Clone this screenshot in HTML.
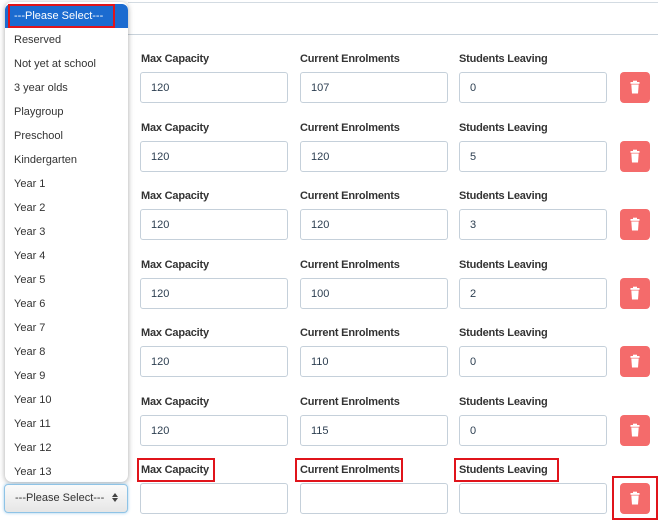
<!DOCTYPE html>
<html><head><style>
body{margin:0;width:658px;height:520px;background:#fff;font-family:"Liberation Sans",sans-serif;position:relative;overflow:hidden;font-size:11px;color:#212529}
.a{position:absolute}
.lbl{position:absolute;font-size:11px;color:#222;font-weight:bold;letter-spacing:-0.2px;opacity:.92}
.in{position:absolute;border:1px solid #c5d0da;border-radius:3px;font-size:11px;color:#2c3e50;line-height:31px;padding-left:10px;box-sizing:border-box;height:31px}
.btn{position:absolute;left:620px;width:30px;height:31px;background:#f46b6b;border-radius:4px}
.dd{left:5px;top:2px;width:123px;height:480px;background:#fff;border-radius:7px;box-shadow:0 1px 6px rgba(0,0,0,.35)}
.it{position:absolute;left:9px;font-size:11px;color:#333}
</style></head><body>
<div class="a" style="left:128px;top:2px;width:540px;height:31px;border-top:1px solid #d3dbe2;border-bottom:1px solid #c8d2db"></div>
<div id="rows"></div>
<div class="a dd">
<div class="a" style="left:0;top:2px;width:123px;height:24px;background:#1b6bd0;border-radius:6px 6px 0 0"></div>
<div class="a" style="left:3px;top:2px;width:103px;height:20px;border:2px solid #e0141b"></div>
<div class="a" style="left:9px;top:8px;color:#fff;font-size:11px">---Please Select---</div>
</div>
<div class="a" style="left:4px;top:484px;width:124px;height:29px;border:1px solid #8ec3e6;border-radius:4px;box-sizing:border-box;box-shadow:0 0 3px #9fcbea;background:linear-gradient(#fafafa,#e6e6e6);font-size:11px;color:#333;line-height:27px;padding-left:10px">---Please Select--- <svg width="6" height="9" style="margin-left:5px;vertical-align:-1px"><path d="M0 4L3 0L6 4z M0 5L3 9L6 5z" fill="#444"/></svg></div>
<script>
var v=[["120","107","0"],["120","120","5"],["120","120","3"],["120","100","2"],["120","110","0"],["120","115","0"],["","",""]];
var h="";var items=["Reserved","Not yet at school","3 year olds","Playgroup","Preschool","Kindergarten","Year 1","Year 2","Year 3","Year 4","Year 5","Year 6","Year 7","Year 8","Year 9","Year 10","Year 11","Year 12","Year 13"];
for(var i=0;i<7;i++){var ly=53+i*68.5,iy=72+i*68.5;
h+='<div class="lbl" style="left:141px;top:'+ly+'px">Max Capacity</div><div class="lbl" style="left:300px;top:'+ly+'px">Current Enrolments</div><div class="lbl" style="left:459px;top:'+ly+'px">Students Leaving</div>';
h+='<div class="in" style="left:140px;top:'+iy+'px;width:148px">'+v[i][0]+'</div><div class="in" style="left:300px;top:'+iy+'px;width:148px">'+v[i][1]+'</div><div class="in" style="left:459px;top:'+iy+'px;width:148px">'+v[i][2]+'</div>';
h+='<div class="btn" style="top:'+iy+'px"><svg width="30" height="31"><rect x="10.5" y="10" width="9" height="1.8" fill="#fff"/><rect x="13" y="8.7" width="4" height="1.5" fill="#fff"/><path d="M11.3 12.5h7.4l-0.7 9h-6z" fill="#fff"/></svg></div>';}
h+='<div class="a" style="left:137px;top:458px;width:74px;height:20px;border:2px solid #e0141b"></div><div class="a" style="left:295px;top:458px;width:104px;height:20px;border:2px solid #e0141b"></div><div class="a" style="left:454px;top:458px;width:101px;height:20px;border:2px solid #e0141b"></div><div class="a" style="left:612px;top:476px;width:42px;height:40px;border:2px solid #e0141b"></div>';
document.getElementById("rows").innerHTML=h;
var d=document.querySelector(".dd"),s="";
for(var j=0;j<items.length;j++)s+='<div class="it" style="top:'+(32+j*24)+'px">'+items[j]+'</div>';
d.insertAdjacentHTML("beforeend",s);
</script>
</body></html>
